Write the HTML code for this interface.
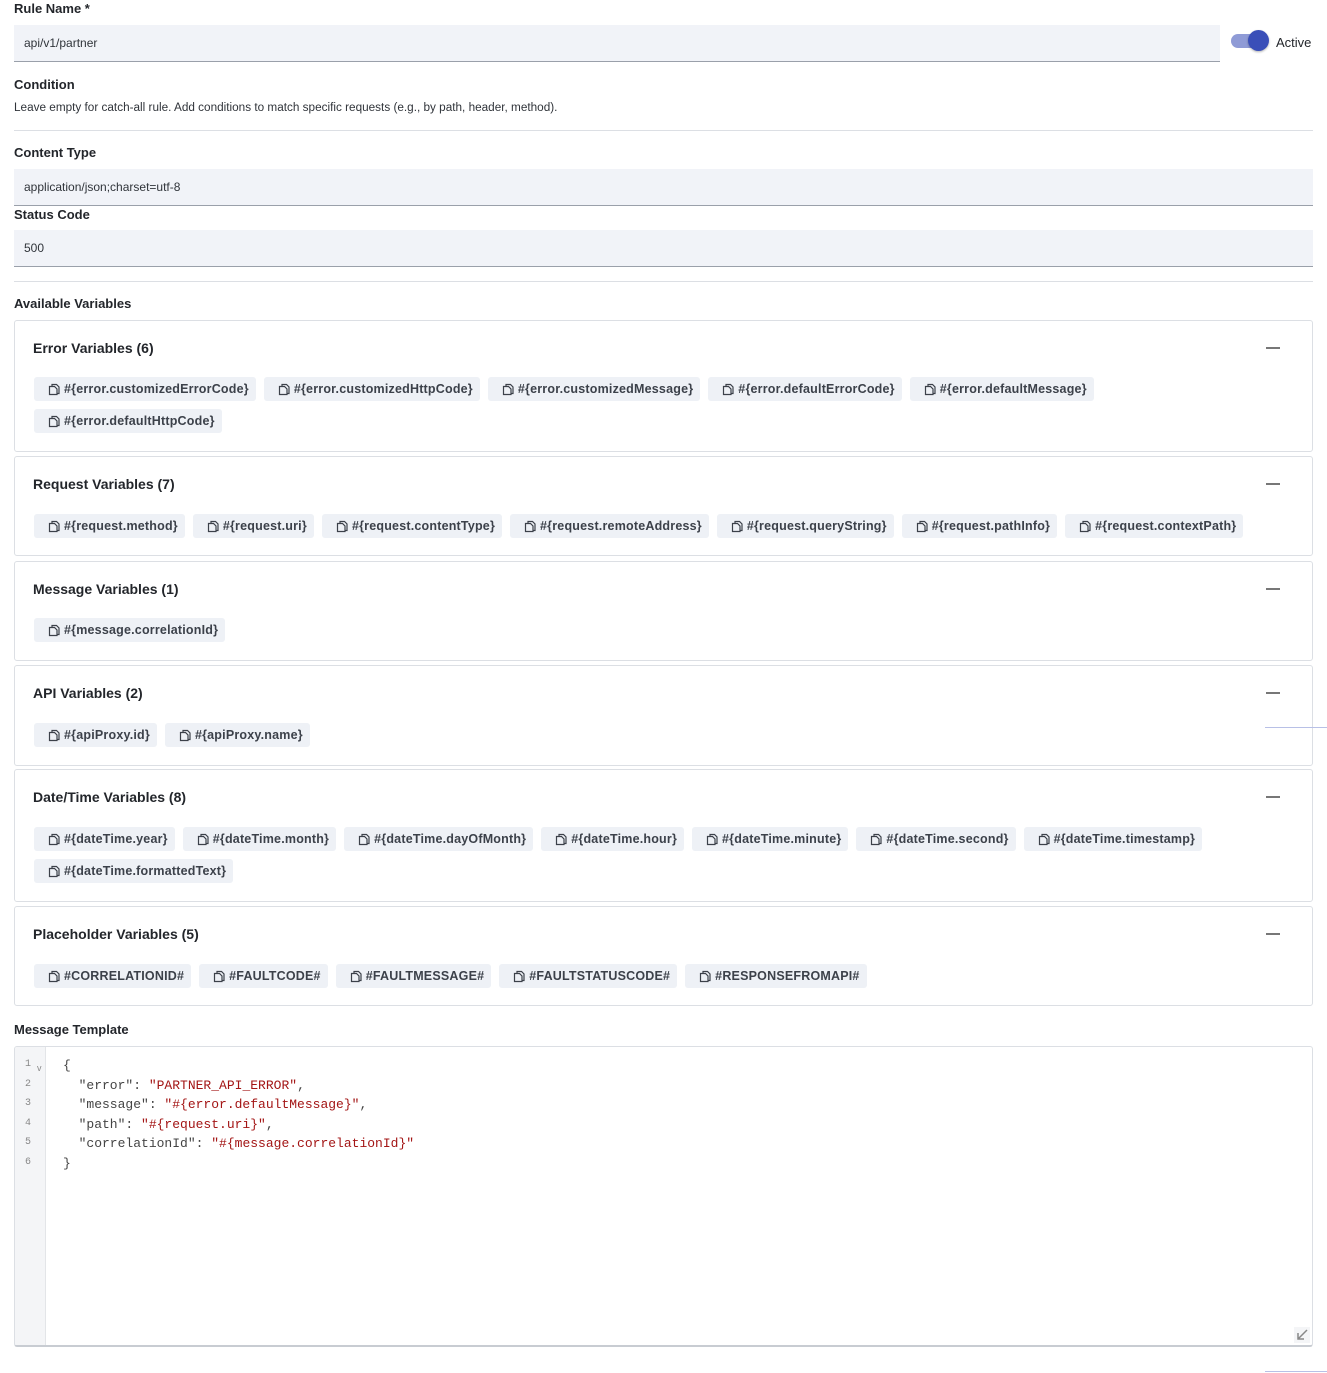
<!DOCTYPE html>
<html><head><meta charset="utf-8"><style>
*{box-sizing:border-box;margin:0;padding:0}
body{width:1327px;height:1373px;background:#fff;font-family:"Liberation Sans",Arial,sans-serif;color:#1f2328;position:relative;overflow:hidden}
.a{position:absolute}
.lbl{font-size:13px;font-weight:600;color:#23262b}
.inp{background:#f1f3f8;border-bottom:1px solid #9aa0aa;font-size:12px;color:#30343a;padding-left:10px;display:flex;align-items:center}
.hr{height:1px;background:#dcdfe4}
.card{position:absolute;left:14px;width:1299px;border:1px solid #dcdfe4;border-radius:3px}
.card h3{position:absolute;left:18px;top:19px;font-size:14px;font-weight:600;color:#23262b}
.card .min{position:absolute;right:32px;top:26px;width:14px;height:2px;background:#777}
.chips{position:absolute;left:19px;top:56px;right:19px;display:flex;flex-wrap:wrap;gap:8px 8px}
.chip{height:24px;background:#eef1f6;border-radius:3px;display:flex;align-items:center;padding:0 7px 0 14px;font-size:12.5px;font-weight:700;color:#3c414a;white-space:nowrap;letter-spacing:0.2px}
.chip svg{margin-right:4px}
.code{font-family:"Liberation Mono",monospace;font-size:13px;line-height:19.5px}
.s{color:#a31515}
</style></head><body>
<div class="a lbl" style="left:14px;top:1px">Rule Name *</div>
<div class="a inp" style="left:14px;top:25px;width:1206px;height:37px">api/v1/partner</div>
<div class="a" style="left:1231px;top:34px;width:36px;height:14px;border-radius:7px;background:#8f9bd6"></div>
<div class="a" style="left:1248px;top:30px;width:21px;height:21px;border-radius:50%;background:#3a4fb8;box-shadow:0 1px 2px rgba(0,0,0,.3)"></div>
<div class="a" style="left:1276px;top:35px;font-size:13px;color:#23262b">Active</div>
<div class="a lbl" style="left:14px;top:77px">Condition</div>
<div class="a" style="left:14px;top:101px;font-size:11.75px;color:#30343a">Leave empty for catch-all rule. Add conditions to match specific requests (e.g., by path, header, method).</div>
<div class="a hr" style="left:14px;top:130px;width:1299px"></div>
<div class="a lbl" style="left:14px;top:145px">Content Type</div>
<div class="a inp" style="left:14px;top:169px;width:1299px;height:37px">application/json;charset=utf-8</div>
<div class="a lbl" style="left:14px;top:207px">Status Code</div>
<div class="a inp" style="left:14px;top:230px;width:1299px;height:37px">500</div>
<div class="a hr" style="left:14px;top:281px;width:1299px"></div>
<div class="a lbl" style="left:14px;top:296px">Available Variables</div>

<svg width="0" height="0" style="position:absolute"><defs><symbol id="c" viewBox="0 0 12 13"><path d="M4 3.5V1.5h4.5l2.5 2.5v6.5H9" fill="none" stroke="#3c414a" stroke-width="1.2"/><path d="M1.5 3.5h5l2.5 2.5v5.5H1.5z" fill="none" stroke="#3c414a" stroke-width="1.2"/></symbol></defs></svg>

<div class="card" style="top:320px;height:132px"><h3>Error Variables (6)</h3><div class="min"></div><div class="chips">
<div class="chip"><svg width="12" height="13"><use href="#c"/></svg>#{error.customizedErrorCode}</div>
<div class="chip"><svg width="12" height="13"><use href="#c"/></svg>#{error.customizedHttpCode}</div>
<div class="chip"><svg width="12" height="13"><use href="#c"/></svg>#{error.customizedMessage}</div>
<div class="chip"><svg width="12" height="13"><use href="#c"/></svg>#{error.defaultErrorCode}</div>
<div class="chip"><svg width="12" height="13"><use href="#c"/></svg>#{error.defaultMessage}</div>
<div class="chip" style="margin-right:200px"><svg width="12" height="13"><use href="#c"/></svg>#{error.defaultHttpCode}</div>
</div></div>

<div class="card" style="top:456px;height:100px"><h3>Request Variables (7)</h3><div class="min"></div><div class="chips" style="top:57px">
<div class="chip"><svg width="12" height="13"><use href="#c"/></svg>#{request.method}</div>
<div class="chip"><svg width="12" height="13"><use href="#c"/></svg>#{request.uri}</div>
<div class="chip"><svg width="12" height="13"><use href="#c"/></svg>#{request.contentType}</div>
<div class="chip"><svg width="12" height="13"><use href="#c"/></svg>#{request.remoteAddress}</div>
<div class="chip"><svg width="12" height="13"><use href="#c"/></svg>#{request.queryString}</div>
<div class="chip"><svg width="12" height="13"><use href="#c"/></svg>#{request.pathInfo}</div>
<div class="chip"><svg width="12" height="13"><use href="#c"/></svg>#{request.contextPath}</div>
</div></div>

<div class="card" style="top:561px;height:100px"><h3>Message Variables (1)</h3><div class="min"></div><div class="chips">
<div class="chip"><svg width="12" height="13"><use href="#c"/></svg>#{message.correlationId}</div>
</div></div>

<div class="card" style="top:665px;height:101px"><h3>API Variables (2)</h3><div class="min"></div><div class="chips" style="top:57px">
<div class="chip"><svg width="12" height="13"><use href="#c"/></svg>#{apiProxy.id}</div>
<div class="chip"><svg width="12" height="13"><use href="#c"/></svg>#{apiProxy.name}</div>
</div></div>
<div class="a" style="left:1265px;top:727px;width:62px;height:1px;background:#b8c0e6"></div>

<div class="card" style="top:769px;height:133px"><h3>Date/Time Variables (8)</h3><div class="min"></div><div class="chips" style="top:57px">
<div class="chip"><svg width="12" height="13"><use href="#c"/></svg>#{dateTime.year}</div>
<div class="chip"><svg width="12" height="13"><use href="#c"/></svg>#{dateTime.month}</div>
<div class="chip"><svg width="12" height="13"><use href="#c"/></svg>#{dateTime.dayOfMonth}</div>
<div class="chip"><svg width="12" height="13"><use href="#c"/></svg>#{dateTime.hour}</div>
<div class="chip"><svg width="12" height="13"><use href="#c"/></svg>#{dateTime.minute}</div>
<div class="chip"><svg width="12" height="13"><use href="#c"/></svg>#{dateTime.second}</div>
<div class="chip"><svg width="12" height="13"><use href="#c"/></svg>#{dateTime.timestamp}</div>
<div class="chip" style="margin-right:300px"><svg width="12" height="13"><use href="#c"/></svg>#{dateTime.formattedText}</div>
</div></div>

<div class="card" style="top:906px;height:100px"><h3>Placeholder Variables (5)</h3><div class="min"></div><div class="chips" style="top:57px">
<div class="chip"><svg width="12" height="13"><use href="#c"/></svg>#CORRELATIONID#</div>
<div class="chip"><svg width="12" height="13"><use href="#c"/></svg>#FAULTCODE#</div>
<div class="chip"><svg width="12" height="13"><use href="#c"/></svg>#FAULTMESSAGE#</div>
<div class="chip"><svg width="12" height="13"><use href="#c"/></svg>#FAULTSTATUSCODE#</div>
<div class="chip"><svg width="12" height="13"><use href="#c"/></svg>#RESPONSEFROMAPI#</div>
</div></div>

<div class="a lbl" style="left:14px;top:1022px">Message Template</div>
<div class="a" style="left:14px;top:1046px;width:1299px;height:301px;border:1px solid #dcdfe4;border-bottom:2px solid #c8ccd2;border-radius:3px;overflow:hidden">
<div class="a" style="left:0;top:0;width:31px;height:100%;background:#f4f5f7;border-right:1px solid #e3e5e8"></div>
<div class="a code" style="left:10px;top:8px;color:#888;font-size:10px">1<br>2<br>3<br>4<br>5<br>6</div>
<div class="a" style="left:22px;top:16px;font-size:9px;color:#888">v</div>
<div class="a code" style="left:48px;top:9px;color:#444;white-space:pre">{
  "error": <span class="s">"PARTNER_API_ERROR"</span>,
  "message": <span class="s">"#{error.defaultMessage}"</span>,
  "path": <span class="s">"#{request.uri}"</span>,
  "correlationId": <span class="s">"#{message.correlationId}"</span>
}</div>
<svg class="a" style="right:2px;bottom:2px" width="16" height="16"><rect width="16" height="16" fill="#f4f5f7"/><path d="M13 3L4 12M4 6v6h6" stroke="#888" stroke-width="1.5" fill="none"/></svg>
</div>
<div class="a" style="left:1265px;top:1371px;width:62px;height:1px;background:#b8c0e6"></div>
</body></html>
